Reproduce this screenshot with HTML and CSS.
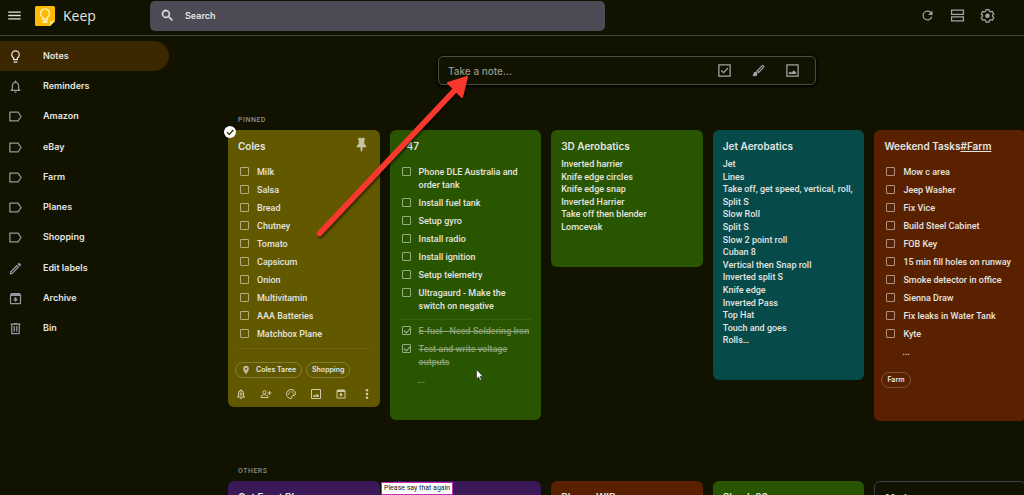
FILE: index.html
```html
<!DOCTYPE html>
<html lang="en">
<head>
<meta charset="utf-8">
<title>Keep</title>
<link rel="stylesheet" href="styles.css">
</head>
<body>
<svg class="sprite" aria-hidden="true">
  <symbol id="bulb" viewBox="0 0 24 24"><path d="M9 21c0 .5.4 1 1 1h4c.6 0 1-.5 1-1v-1H9v1zm3-19C8.100 2 5 5.100 5 9c0 2.400 1.200 4.500 3 5.700V17c0 .5.4 1 1 1h6c.6 0 1-.5 1-1v-2.300c1.800-1.300 3-3.400 3-5.700 0-3.900-3.100-7-7-7zm2.900 11.100-.9.600V16h-4v-2.300l-.9-.6A5 5 0 0 1 7 9a5 5 0 0 1 10 0c0 1.600-.8 3.200-2.100 4.100z"/></symbol>
  <symbol id="bell" viewBox="0 0 24 24"><path d="M12 22c1.100 0 2-.9 2-2h-4c0 1.100.9 2 2 2zm6-6v-5c0-3.100-1.600-5.600-4.500-6.300V4a1.500 1.500 0 0 0-3 0v.7C7.600 5.400 6 7.900 6 11v5l-2 2v1h16v-1l-2-2zm-2 1H8v-6c0-2.500 1.500-4.500 4-4.500s4 2 4 4.500v6z"/></symbol>
  <symbol id="label" viewBox="0 0 24 24"><path d="M16 5H3v14h13l5-7z" fill="none" stroke="currentColor" stroke-width="2" stroke-linejoin="round"/></symbol>
  <symbol id="pencil" viewBox="0 0 24 24"><path d="M3 17.250V21h3.750L17.800 9.940l-3.750-3.750L3 17.250zM5.900 19H5v-.9l9.100-9.100.9.900L5.900 19zM20.700 5.600l-2.300-2.300a1 1 0 0 0-1.400 0l-1.900 1.900 3.750 3.750 1.850-1.900a1 1 0 0 0 0-1.450z"/></symbol>
  <symbol id="archive" viewBox="0 0 24 24"><path d="M20.500 5.200 19.200 3.500C18.900 3.200 18.500 3 18 3H6c-.5 0-.9.200-1.200.6L3.500 5.200C3.200 5.600 3 6 3 6.500V19c0 1.100.9 2 2 2h14a2 2 0 0 0 2-2V6.500c0-.5-.2-.9-.5-1.300zM5 19V8h14v11H5zm8.500-9h-3v3H8l4 4 4-4h-2.500z"/></symbol>
  <symbol id="bin" viewBox="0 0 24 24"><path d="M15 4V3H9v1H4v2h1v13c0 1.100.9 2 2 2h10a2 2 0 0 0 2-2V6h1V4h-5zm2 15H7V6h10v13zM9 8h2v9H9zm4 0h2v9h-2z"/></symbol>
  <symbol id="menu" viewBox="0 0 24 24"><path d="M2 18.500h20v-2.200H2v2.200zm0-5.400h20v-2.200H2v2.200zm0-7.600v2.200h20V5.500H2z"/></symbol>
  <symbol id="search" viewBox="0 0 24 24"><path d="M15.500 14h-.8l-.3-.3A6.500 6.500 0 1 0 13.700 14.400l.3.300v.8l5 5 1.500-1.500-5-5zm-6 0a4.500 4.500 0 1 1 0-9 4.500 4.500 0 0 1 0 9z" stroke="currentColor" stroke-width=".6"/></symbol>
  <symbol id="refresh" viewBox="0 0 24 24"><path d="M17.650 6.350A8 8 0 1 0 19.730 14h-2.080A6 6 0 1 1 12 6c1.660 0 3.140.69 4.220 1.780L13 11h7V4z"/></symbol>
  <symbol id="rows" viewBox="0 0 24 24"><path d="M2.500 3.500h19v6.500h-19zM2.500 14h19v6.500h-19z" fill="none" stroke="currentColor" stroke-width="2"/></symbol>
  <symbol id="gear" viewBox="0 0 24 24"><path d="M9.500 2.500h5l.6 2.800 1.800 1 2.700-.9 2.500 4.300-2.100 1.900v1.800l2.100 1.900-2.500 4.300-2.700-.9-1.800 1-.6 2.800h-5l-.6-2.800-1.800-1-2.700.9-2.500-4.300L4 13.400v-1.800L1.900 9.700l2.500-4.300 2.700.9 1.800-1z" fill="none" stroke="currentColor" stroke-width="2" stroke-linejoin="round"/><circle cx="12" cy="12.500" r="3.600"/></symbol>
  <symbol id="tickbox" viewBox="0 0 24 24"><path d="M3 3h18v18H3z" fill="none" stroke="currentColor" stroke-width="2"/><path d="m7 12 3.500 3.500L17.500 8" fill="none" stroke="currentColor" stroke-width="2"/></symbol>
  <symbol id="brush" viewBox="0 0 24 24"><path d="M7 14c-1.700 0-3 1.300-3 3 0 1.300-1.200 2-2 2 .9 1.200 2.500 2 4 2a4 4 0 0 0 4-4c0-1.700-1.300-3-3-3z"/><path d="m9.500 13 8.500-8.700c1-1 3.300 1 2.200 2.300L11.800 15.300z" fill="none" stroke="currentColor" stroke-width="2"/></symbol>
  <symbol id="image" viewBox="0 0 24 24"><path d="M3 3h18v18H3z" fill="none" stroke="currentColor" stroke-width="2"/><path d="M6 17.500v-2l2.500-2 2 2 3.500-4 4 4v2z"/></symbol>
  <symbol id="pin" viewBox="0 0 24 24"><path d="M17 4V2H7v2h1v7l-3 3v2h6v5l1 2 1-2v-5h6v-2l-3-3V4z" stroke="currentColor"/></symbol>
  <symbol id="place" viewBox="0 0 24 24"><path fill-rule="evenodd" d="M12 2a7 7 0 0 0-7 7c0 5.250 7 13 7 13s7-7.750 7-13a7 7 0 0 0-7-7zm0 9.500a2.500 2.500 0 1 1 0-5 2.500 2.500 0 0 1 0 5z"/></symbol>
  <symbol id="bell-add" viewBox="0 0 24 24"><path d="M12 22c1.100 0 2-.9 2-2h-4c0 1.100.9 2 2 2zm6-6v-5c0-3.100-1.600-5.600-4.500-6.300V4a1.500 1.500 0 0 0-3 0v.7C7.600 5.400 6 7.900 6 11v5l-2 2v1h16v-1l-2-2zm-2 1H8v-6c0-2.500 1.500-4.500 4-4.500s4 2 4 4.500v6z"/><path d="M11 8.500h2V11h2v2h-2v2.500h-2V13H9v-2h2z"/></symbol>
  <symbol id="person-add" viewBox="0 0 24 24"><circle cx="9" cy="8.500" r="3.200" fill="none" stroke="currentColor" stroke-width="2"/><path d="M2 19v-2c0-2 4-3.500 7-3.500s7 1.500 7 3.500v2z" fill="none" stroke="currentColor" stroke-width="2"/><path d="M18 6h2v3h3v2h-3v3h-2v-3h-3V9h3z"/></symbol>
  <symbol id="palette" viewBox="0 0 24 24"><path d="M12 3a9 9 0 0 0 0 18c2.500 0 2.500-2 1.800-3-.8-1.300 0-3 1.700-3H18c2 0 3-1.500 3-4 0-4.500-4-8-9-8z" fill="none" stroke="currentColor" stroke-width="2"/><circle cx="7" cy="12" r="1.500"/><circle cx="9.500" cy="8" r="1.500"/><circle cx="14.500" cy="8" r="1.500"/><circle cx="17.500" cy="11.500" r="1.500"/></symbol>
  <symbol id="dots" viewBox="0 0 24 24"><circle cx="12" cy="4.500" r="2.600"/><circle cx="12" cy="12" r="2.600"/><circle cx="12" cy="19.500" r="2.600"/></symbol>
</svg>

<div class="app">
  <header class="topbar">
    <button class="icon-btn" aria-label="Main menu"><svg class="icon"><use href="#menu"/></svg></button>
    <a class="brand" href="#">
      <svg class="logo" viewBox="0 0 20 20" aria-hidden="true">
        <path d="M1.500 0h17A1.500 1.500 0 0 1 20 1.500V15l-5 5H1.500A1.500 1.500 0 0 1 0 18.500v-17A1.500 1.500 0 0 1 1.500 0z" fill="#ffbb00"/>
        <path d="M20 15h-5v5z" fill="#ffe38a"/>
        <path d="M7.500 13v-1.800a4.500 4.500 0 1 1 5 0V13z" fill="none" stroke="#fff3cf" stroke-width="1.300"/>
        <path d="M7.500 14.500h5v1.500l-1 1h-3l-1-1z" fill="#fff3cf"/>
      </svg>
      <span>Keep</span>
    </a>
    <form class="search">
      <button class="icon-btn" type="button" aria-label="Search"><svg class="icon"><use href="#search"/></svg></button>
      <input type="search" placeholder="Search" aria-label="Search notes">
    </form>
    <div class="tools">
      <button class="icon-btn" aria-label="Refresh"><svg class="icon"><use href="#refresh"/></svg></button>
      <button class="icon-btn" aria-label="List view"><svg class="icon"><use href="#rows"/></svg></button>
      <button class="icon-btn" aria-label="Settings"><svg class="icon"><use href="#gear"/></svg></button>
    </div>
  </header>

  <div class="body">
    <nav class="sidebar">
      <div class="nav-group">
        <a class="nav-item active" href="#"><svg class="icon"><use href="#bulb"/></svg>Notes</a>
        <a class="nav-item" href="#"><svg class="icon"><use href="#bell"/></svg>Reminders</a>
        <a class="nav-item" href="#"><svg class="icon"><use href="#label"/></svg>Amazon</a>
      </div>
      <div class="nav-group">
        <a class="nav-item" href="#"><svg class="icon"><use href="#label"/></svg>eBay</a>
        <a class="nav-item" href="#"><svg class="icon"><use href="#label"/></svg>Farm</a>
        <a class="nav-item" href="#"><svg class="icon"><use href="#label"/></svg>Planes</a>
        <a class="nav-item" href="#"><svg class="icon"><use href="#label"/></svg>Shopping</a>
      </div>
      <div class="nav-group">
        <a class="nav-item" href="#"><svg class="icon"><use href="#pencil"/></svg>Edit labels</a>
        <a class="nav-item" href="#"><svg class="icon"><use href="#archive"/></svg>Archive</a>
        <a class="nav-item" href="#"><svg class="icon"><use href="#bin"/></svg>Bin</a>
      </div>
    </nav>

    <main class="main">
      <div class="composer">
        <input type="text" placeholder="Take a note..." aria-label="Take a note">
        <button class="icon-btn" aria-label="New list"><svg class="icon"><use href="#tickbox"/></svg></button>
        <button class="icon-btn" aria-label="New drawing"><svg class="icon"><use href="#brush"/></svg></button>
        <button class="icon-btn" aria-label="New image note"><svg class="icon"><use href="#image"/></svg></button>
      </div>

      <h2 class="section">PINNED</h2>
      <div class="grid">
        <article class="card olive">
          <button class="select-mark" aria-label="Select note"><svg viewBox="0 0 12 12"><path d="m3 6.200 2.200 2.200L9.300 4" fill="none" stroke="#2a2700" stroke-width="1.300"/></svg></button>
          <button class="pin" aria-label="Unpin note"><svg class="icon"><use href="#pin"/></svg></button>
          <h3>Coles</h3>
          <ul class="list">
            <li><label><input type="checkbox">Milk</label></li>
            <li><label><input type="checkbox">Salsa</label></li>
            <li><label><input type="checkbox">Bread</label></li>
            <li><label><input type="checkbox">Chutney</label></li>
            <li><label><input type="checkbox">Tomato</label></li>
            <li><label><input type="checkbox">Capsicum</label></li>
            <li><label><input type="checkbox">Onion</label></li>
            <li><label><input type="checkbox">Multivitamin</label></li>
            <li><label><input type="checkbox">AAA Batteries</label></li>
            <li><label><input type="checkbox">Matchbox Plane</label></li>
          </ul>
          <hr>
          <div class="chips">
            <button class="chip"><svg class="icon"><use href="#place"/></svg>Coles Taree</button>
            <button class="chip">Shopping</button>
          </div>
          <div class="actions">
            <button aria-label="Remind me"><svg class="icon"><use href="#bell-add"/></svg></button>
            <button aria-label="Collaborator"><svg class="icon"><use href="#person-add"/></svg></button>
            <button aria-label="Background options"><svg class="icon"><use href="#palette"/></svg></button>
            <button aria-label="Add image"><svg class="icon"><use href="#image"/></svg></button>
            <button aria-label="Archive"><svg class="icon"><use href="#archive"/></svg></button>
            <button aria-label="More"><svg class="icon"><use href="#dots"/></svg></button>
          </div>
        </article>

        <article class="card green">
          <h3 class="indent">47</h3>
          <ul class="list">
            <li><label><input type="checkbox">Phone DLE Australia and order tank</label></li>
            <li><label><input type="checkbox">Install fuel tank</label></li>
            <li><label><input type="checkbox">Setup gyro</label></li>
            <li><label><input type="checkbox">Install radio</label></li>
            <li><label><input type="checkbox">Install ignition</label></li>
            <li><label><input type="checkbox">Setup telemetry</label></li>
            <li><label><input type="checkbox">Ultragaurd - Make the switch on negative</label></li>
          </ul>
          <hr>
          <ul class="list done">
            <li><label><input type="checkbox" checked><s>E-fuel - Need Soldering Iron</s></label></li>
            <li><label><input type="checkbox" checked><s>Test and write voltage outputs</s></label></li>
            <li class="more">...</li>
          </ul>
        </article>

        <article class="card green">
          <h3>3D Aerobatics</h3>
          <p>Inverted harrier<br>Knife edge circles<br>Knife edge snap<br>Inverted Harrier<br>Take off then blender<br>Lomcevak</p>
        </article>

        <article class="card teal">
          <h3>Jet Aerobatics</h3>
          <p>Jet<br>Lines<br>Take off, get speed, vertical, roll,<br>Split S<br>Slow Roll<br>Split S<br>Slow 2 point roll<br>Cuban 8<br>Vertical then Snap roll<br>Inverted split S<br>Knife edge<br>Inverted Pass<br>Top Hat<br>Touch and goes<br>Rolls…</p>
        </article>

        <article class="card brown">
          <h3>Weekend Tasks<a href="#">#Farm</a></h3>
          <ul class="list">
            <li><label><input type="checkbox">Mow c area</label></li>
            <li><label><input type="checkbox">Jeep Washer</label></li>
            <li><label><input type="checkbox">Fix Vice</label></li>
            <li><label><input type="checkbox">Build Steel Cabinet</label></li>
            <li><label><input type="checkbox">FOB Key</label></li>
            <li><label><input type="checkbox">15 min fill holes on runway</label></li>
            <li><label><input type="checkbox">Smoke detector in office</label></li>
            <li><label><input type="checkbox">Sienna Draw</label></li>
            <li><label><input type="checkbox">Fix leaks in Water Tank</label></li>
            <li><label><input type="checkbox">Kyte</label></li>
            <li class="more">...</li>
          </ul>
          <div class="chips"><button class="chip">Farm</button></div>
        </article>
      </div>

      <h2 class="section others">OTHERS</h2>
      <div class="grid">
        <article class="card purple"><h3>Get Front Plane</h3></article>
        <article class="card purple"></article>
        <article class="card brown"><h3>Planes WIP</h3></article>
        <article class="card green"><h3>Shack 90</h3></article>
        <article class="card plain"><h3>Meds</h3></article>
      </div>
    </main>
  </div>

  <svg class="arrow" viewBox="0 0 160 170" aria-hidden="true">
    <path d="M9.500 162.500 145 19" stroke="#f8382c" stroke-width="5.500" stroke-linecap="round"/>
    <path d="M157 6 138 12l14 14z" fill="#f8382c" stroke="#f8382c" stroke-width="2" stroke-linejoin="round"/>
  </svg>
  <svg class="cursor" viewBox="0 0 8 12" aria-hidden="true"><path d="M.5.5v9.300l2.100-1.900 1.500 3.400 1.400-.6-1.400-3.300h2.900z" fill="#fff" stroke="#222" stroke-width=".6"/></svg>
  <div class="caption" role="status">Please say that again</div>
</div>
</body>
</html>
```
FILE: styles.css
```css
* { box-sizing: border-box; }

body {
  margin: 0;
  background: #111200;
  color: #e4e5e0;
  font-family: Roboto, "Liberation Sans", sans-serif;
  font-size: 9px;
  font-weight: 500;
  line-height: 1.4;
}

h2, h3, p, ul { margin: 0; padding: 0; }
ul { list-style: none; }
a { color: inherit; text-decoration: none; }
button, input { font: inherit; color: inherit; }
button { display: flex; align-items: center; justify-content: center; padding: 0; border: 0; background: none; }

.sprite { position: absolute; width: 0; height: 0; }
.icon { display: block; width: 15px; height: 15px; flex: none; fill: currentColor; }

.app { position: relative; height: 100vh; overflow: hidden; display: flex; flex-direction: column; }

.topbar {
  flex: none;
  display: flex;
  align-items: center;
  height: 36px;
  padding: 0 29px 4px 7px;
  border-bottom: 1px solid #41433a;
}
.brand { display: flex; align-items: center; gap: 8px; width: 116px; margin-left: 13px; font: 500 14px/20px "Open Sans", sans-serif; }
.logo { width: 20px; height: 20px; }
.search {
  display: flex;
  align-items: center;
  gap: 10px;
  flex: 0 1 455px;
  height: 30px;
  padding-left: 10px;
  margin-right: auto;
  margin-left: -1px;
  border-radius: 5px;
  background: #4c4b55;
}
.search input { flex: 1; min-width: 0; padding: 0; border: 0; outline: 0; background: none; font: 600 9px/14px Inter, sans-serif; }
.search input::placeholder { color: #e4e5e8; opacity: 1; }
.tools { display: flex; gap: 15px; color: #a3a3a8; }

.body { flex: 1; min-height: 0; display: flex; }
.sidebar { flex: none; display: flex; flex-direction: column; gap: 1px; width: 169px; padding-top: 5px; }
.nav-item {
  display: flex;
  align-items: center;
  gap: 20px;
  height: 30px;
  padding-left: 8px;
  border-radius: 0 15px 15px 0;
  font: 600 9px/12px Inter, sans-serif;
}
.nav-item .icon { color: #9696a0; }
.active { background: #3c2800; }
.active .icon { color: #e8e8e8; }

.main { flex: 1; min-width: 0; margin-right: -2px; padding: 20px 0 0 59px; }

.composer {
  display: flex;
  align-items: center;
  gap: 19px;
  max-width: 378px;
  height: 29px;
  margin: 0 auto;
  padding: 0 15px 0 9px;
  border: 1px solid #4a4d44;
  border-radius: 5px;
  box-shadow: 0 1px 3px 1px #000;
  color: #a3a3a8;
}
.composer input { flex: 1; min-width: 0; padding: 0; border: 0; outline: 0; background: none; font: 500 10px/14px Inter, sans-serif; }
.composer input::placeholder { color: #94958c; opacity: 1; }

.section { margin: 29px 0 4px 10px; color: #8d8f8a; font: 500 7px/12px Roboto, sans-serif; letter-spacing: 0.5px; }
.others { margin-top: 44px; }

.grid { display: grid; grid-template-columns: repeat(5, minmax(0, 1fr)); gap: 10px; align-items: start; }
.card { position: relative; min-height: 60px; padding: 9px 10px 33px; border-radius: 6px; }
.card h3 { font: 600 10px/14px Inter, sans-serif; white-space: nowrap; }
.card h3 a { text-decoration: underline; }
.card p { margin-top: 5px; white-space: nowrap; }
.card .indent { padding-left: 7px; }
.olive { background: #615800; padding-bottom: 7px; }
.green { background: #2a5500; }
.teal { background: #064a49; }
.brown { background: #5a2100; }
.purple { background: #3b1958; }
.plain { border: 1px solid #3d3d48; }

.list { display: flex; flex-direction: column; gap: 5px; margin-top: 13px; line-height: 13px; }
.list label { display: flex; gap: 8px; }
.list input {
  position: relative;
  appearance: none;
  flex: none;
  width: 9px;
  height: 9px;
  margin: 1px 0 0 2px;
  border: 1px solid #ffffff80;
  border-radius: 1px;
}
.list input:checked::before {
  content: "";
  position: absolute;
  left: 2px;
  top: 0;
  width: 3px;
  height: 5px;
  border: solid #ffffffa0;
  border-width: 0 1px 1px 0;
  transform: rotate(42deg);
}
.more { padding-left: 18px; }
.card hr { height: 1px; margin: 6px 0 0; border: 0; background: #ffffff14; }
.olive hr { margin-top: 7px; }
.done { margin-top: 5px; color: #8fa37c; }

.chips { display: flex; gap: 4px; margin: 13px -5px 0 -3px; }
.chip {
  gap: 5px;
  height: 16px;
  padding: 0 5px;
  border: 1px solid #ffffff38;
  border-radius: 8px;
  font: 600 7px/12px Inter, sans-serif;
  white-space: nowrap;
}
.chip .icon { width: 10px; height: 10px; opacity: 0.7; }
.actions { display: flex; justify-content: space-between; margin: 10px -3px 0 -3px; color: #d0cda8; }
.actions .icon { width: 12px; height: 12px; }

.pin { position: absolute; top: 7px; right: 11px; color: #c6c4a0; }
.select-mark { position: absolute; top: -4px; left: -4px; width: 12px; height: 12px; border-radius: 50%; background: #fff; }

.arrow { position: absolute; left: 310px; top: 71px; width: 160px; height: 170px; filter: drop-shadow(1px 2px 1px #0008); }
.cursor { position: absolute; left: 476px; top: 369px; width: 8px; height: 12px; }
.caption {
  position: absolute;
  left: 381px;
  bottom: 0;
  height: 13px;
  padding: 0 2px;
  border: 1px solid #c030b0;
  background: #fff;
  color: #222;
  font: 400 7px/11px Roboto, sans-serif;
  white-space: nowrap;
}
```
